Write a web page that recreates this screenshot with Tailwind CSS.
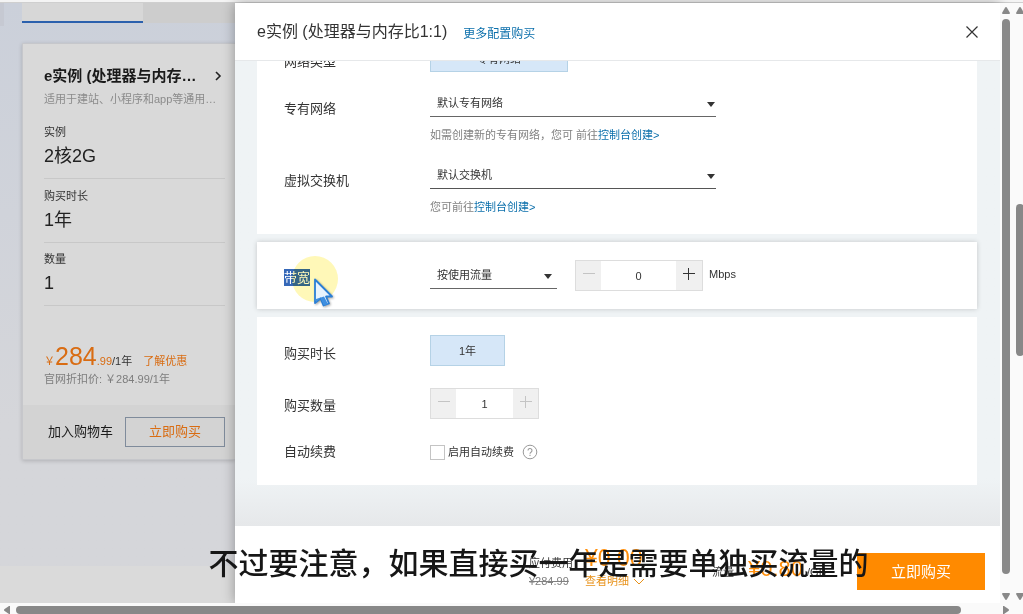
<!DOCTYPE html>
<html lang="zh-CN">
<head>
<meta charset="utf-8">
<title>e实例 购买</title>
<script src="https://cdn.jsdelivr.net/npm/@tailwindcss/browser@4"></script>
</head>
<body class="relative flex h-screen flex-col overflow-hidden bg-[#fafafa] font-['Liberation_Sans','Noto_Sans_CJK_SC',sans-serif] text-[11px] leading-4 text-[#333]">
  <div class="h-[3px] shrink-0 border-b border-[#cfcfcf] bg-[#f4f4f4]"></div>

  <div class="flex min-h-0 flex-1">
    <!-- Dimmed page behind the drawer -->
    <main class="flex w-[235px] shrink-0 flex-col overflow-hidden bg-linear-to-b from-[#cbd0da] to-[#d5d6da] to-70%">
      <div class="flex h-5 shrink-0">
        <div class="h-[23px] w-1 bg-[#c6c9d2]"></div>
        <div class="ml-[18px] w-[121px] border-b-2 border-[#2b60ad] bg-[#d7d7d7]"></div>
        <div class="flex-1 bg-[#cdcdcd]"></div>
      </div>

      <article class="mt-5 ml-[22px] shrink-0 border border-r-0 border-[#c6c7cb] bg-[#d9d9d9] shadow-[0_1px_4px_#0000002e]">
        <div class="pt-[21px] pr-[10px] pl-[21px]">
          <div class="flex items-center justify-between">
            <h2 class="text-[15px] leading-[22px] font-bold whitespace-nowrap text-[#1a1a1a]">e实例 (处理器与内存…</h2>
            <button type="button" aria-label="展开" class="px-[3px]">
              <svg class="h-[10px] w-2" viewBox="0 0 8 10" fill="none" stroke="#222" stroke-width="1.6"><path d="M2 1l4 4-4 4"/></svg>
            </button>
          </div>
          <p class="mt-1 whitespace-nowrap text-[#8b8b8b]">适用于建站、小程序和app等通用…</p>
          <dl class="mt-[9px]">
            <div class="border-b border-[#c8c8c8] pt-2 pb-[10px]"><dt>实例</dt><dd class="mt-1 text-[18px] leading-6 text-[#222]">2核2G</dd></div>
            <div class="border-b border-[#c8c8c8] pt-[9px] pb-[10px]"><dt>购买时长</dt><dd class="mt-1 text-[18px] leading-6 text-[#222]">1年</dd></div>
            <div class="border-b border-[#c8c8c8] pt-2 pb-[10px]"><dt>数量</dt><dd class="mt-1 text-[18px] leading-6 text-[#222]">1</dd></div>
          </dl>
          <div class="mt-[35px] flex items-baseline text-[#d96c12]">
            <span>￥</span><span class="text-[25px] leading-[30px]">284</span><span>.99</span><span class="text-[#333]">/1年</span>
            <a href="#" class="ml-[11px]">了解优惠</a>
          </div>
          <p class="text-[#7d7d7d]">官网折扣价: ￥284.99/1年</p>
        </div>
        <div class="mt-[18px] flex items-center justify-between bg-[#d3d3d3] py-3 pr-[10px] pl-[25px] text-[13px]">
          <button type="button" class="text-[#1a1a1a]">加入购物车</button>
          <button type="button" class="h-[30px] w-[100px] border border-[#7f8b9b] text-[#d96c12]">立即购买</button>
        </div>
      </article>
      <div class="mt-auto h-[37px] shrink-0 bg-[#dadada]"></div>
    </main>

    <!-- Drawer -->
    <section class="relative flex min-w-0 flex-1 flex-col bg-[#eff2f4] shadow-[0_0_12px_#00000055]">
      <header class="flex h-[58px] shrink-0 items-center border-b border-[#e6e8ea] bg-white pr-[21px] pl-[22px]">
        <h1 class="text-[16px] leading-6">e实例 (处理器与内存比1:1)</h1>
        <a href="#" class="ml-4 pt-1 text-[12px] text-[#0b6fab]">更多配置购买</a>
        <button type="button" aria-label="关闭" class="ml-auto">
          <svg class="size-[14px]" viewBox="0 0 14 14" fill="none" stroke="#333" stroke-width="1.2"><path d="M1.500 1.500l11 11M12.500 1.500l-11 11"/></svg>
        </button>
      </header>

      <div class="min-h-0 flex-1 overflow-hidden bg-linear-to-b from-[#eff3f5] from-90% to-[#e6e8ea] pr-[23px] pl-[22px]">
        <div class="-mt-5 flex flex-col gap-2">
          <div class="bg-white pb-[19px] pl-[27px]">
            <div class="flex items-center">
              <span class="w-[146px] pt-[10px] text-[13px]">网络类型</span>
              <button type="button" class="h-[31px] w-[138px] border border-[#b5d2e6] bg-[#d6e7f8] pt-[5px]">专有网络</button>
            </div>
            <div class="mt-[17px] flex items-start">
              <label for="vpc" class="w-[146px] pt-3 text-[13px]">专有网络</label>
              <div>
                <div class="relative w-[286px]">
                  <select id="vpc" class="h-7 w-full appearance-none border-b border-[#666] pl-[7px]"><option>默认专有网络</option></select>
                  <svg class="pointer-events-none absolute top-[13px] right-px h-[5px] w-2" viewBox="0 0 8 5" fill="#333"><path d="M0 0h8L4 5z"/></svg>
                </div>
                <p class="mt-[10px] text-[#808080]">如需创建新的专有网络，您可 前往<a href="#" class="text-[#0b6fab]">控制台创建&gt;</a></p>
              </div>
            </div>
            <div class="mt-[18px] flex items-start">
              <label for="vsw" class="w-[146px] pt-3 text-[13px]">虚拟交换机</label>
              <div>
                <div class="relative w-[286px]">
                  <select id="vsw" class="h-7 w-full appearance-none border-b border-[#555] pl-[7px]"><option>默认交换机</option></select>
                  <svg class="pointer-events-none absolute top-[13px] right-px h-[5px] w-2" viewBox="0 0 8 5" fill="#333"><path d="M0 0h8L4 5z"/></svg>
                </div>
                <p class="mt-[10px] text-[#808080]">您可前往<a href="#" class="text-[#0b6fab]">控制台创建&gt;</a></p>
              </div>
            </div>
          </div>

          <div class="flex items-start bg-white pt-[18px] pb-[18px] pl-[27px] shadow-[0_0_5px_#0000002e]">
            <div class="w-[146px] pt-[9px]">
              <label for="bw" class="relative inline-block bg-[#3568b8] text-[13px] leading-[17px] text-white">带宽
                <span class="absolute top-[-13px] left-2 size-[46px] rounded-full bg-[#fff8b8] mix-blend-multiply"></span>
                <svg class="absolute top-[9px] left-[29px] h-[31px] w-[22px] drop-shadow-[1px_1px_1px_#00000055]" viewBox="0 0 22 31"><path d="M2 1.500v23.500l5.500-4.500 3 7 5.500-2-3-7h6z" fill="#e8f3fd" stroke="#2b7fd6" stroke-width="1.800" stroke-linejoin="round"/><path d="M3 21v3l4.500-4 3.500 7.500 4-1.500-4-7.500z" fill="#3f8fe0"/></svg>
              </label>
            </div>
            <div class="relative w-[127px]">
              <select id="bw" class="h-[29px] w-full appearance-none border-b border-[#666] pt-[2px] pl-[7px]"><option>按使用流量</option></select>
              <svg class="pointer-events-none absolute top-[14px] right-[5px] h-[5px] w-2" viewBox="0 0 8 5" fill="#333"><path d="M0 0h8L4 5z"/></svg>
            </div>
            <div class="ml-[18px] flex h-[31px] w-32 border border-[#ddd]">
              <button type="button" aria-label="减少带宽" class="flex w-[25px] justify-center bg-[#f0f0f0] pt-[7px]"><svg class="size-3" viewBox="0 0 12 12" stroke="#c4c4c4"><path d="M0 5.500h12"/></svg></button>
              <input type="text" aria-label="带宽值" value="0" class="min-w-0 flex-1 text-center">
              <button type="button" aria-label="增加带宽" class="flex w-[26px] justify-center bg-[#f0f0f0] pt-[7px]"><svg class="size-3" viewBox="0 0 12 12" stroke="#333"><path d="M0 5.500h12M5.500 0v12"/></svg></button>
            </div>
            <span class="ml-[6px] pt-[6px]">Mbps</span>
          </div>

          <div class="bg-white pt-[18px] pb-[25px] pl-[27px]">
            <div class="flex items-center">
              <span class="w-[146px] pt-[6px] text-[13px]">购买时长</span>
              <button type="button" class="h-[31px] w-[75px] border border-[#b5d2e6] bg-[#d6e7f8]">1年</button>
            </div>
            <div class="mt-[22px] flex items-center">
              <label for="qty" class="w-[146px] pt-1 text-[13px]">购买数量</label>
              <div class="flex h-[31px] w-[109px] border border-[#ddd]">
                <button type="button" aria-label="减少数量" class="flex w-[25px] justify-center bg-[#f0f0f0] pt-[7px]"><svg class="size-3" viewBox="0 0 12 12" stroke="#c4c4c4"><path d="M0 5.500h12"/></svg></button>
                <input id="qty" type="text" value="1" class="min-w-0 flex-1 text-center">
                <button type="button" aria-label="增加数量" class="flex w-[25px] justify-center bg-[#f0f0f0] pt-[7px]"><svg class="size-3" viewBox="0 0 12 12" stroke="#c4c4c4"><path d="M0 5.500h12M5.500 0v12"/></svg></button>
              </div>
            </div>
            <div class="mt-[25px] flex h-4 items-center">
              <span class="w-[146px] text-[13px]">自动续费</span>
              <input id="renew" type="checkbox" class="size-[15px] appearance-none border border-[#c4c4c4] bg-white">
              <label for="renew" class="ml-[3px]">启用自动续费</label>
              <button type="button" aria-label="自动续费说明" class="ml-2">
                <svg class="size-4" viewBox="0 0 16 16" fill="none" stroke="#999"><circle cx="8" cy="8" r="6.800"/><path d="M6 6.500a2 2 0 1 1 3 1.700q-1 .6-1 1.600M8 10.800v1.200" stroke-width="1.100"/></svg>
              </button>
            </div>
          </div>
        </div>
      </div>

      <footer class="flex h-[77px] shrink-0 items-center bg-white pt-[14px] pr-[15px] pl-[294px]">
        <div class="grid grid-cols-[56px_auto] items-center gap-y-px pb-[10px]">
          <span class="pt-[9px]">应付费用</span>
          <span class="text-[23px] leading-7 text-[#ff8f0c]">¥0.00</span>
          <del class="text-[#808080]">¥284.99</del>
          <a href="#" class="flex items-center gap-1 text-[#e8921a]">查看明细
            <svg class="h-[7px] w-3" viewBox="0 0 12 7" fill="none" stroke="#e8921a"><path d="M1 1l5 5 5-5"/></svg>
          </a>
        </div>
        <div class="ml-auto flex items-baseline pb-[6px]">
          <span>流量</span>
          <span class="ml-[14px] text-[22px] leading-7 text-[#ff8f0c]">¥0.80</span>
          <span class="ml-1">/GB</span>
        </div>
        <button type="button" class="ml-[31px] h-[37px] w-32 bg-[#ff8a00] text-[15px] text-white">立即购买</button>
      </footer>
    </section>

    <!-- Vertical scroll bars: drawer and page -->
    <div class="z-10 flex w-[23px] shrink-0 gap-[6px] overflow-hidden bg-[#fafafa] pl-[2px]" aria-hidden="true">
      <div class="flex shrink-0 flex-col items-center pt-1 pb-[3px]">
        <svg class="h-[7px] w-2" viewBox="0 0 8 7" fill="#888"><path d="M4 0q.6 0 1 .7L8 6q0 1-1 1H1Q0 7 0 6L3 .7Q3.400 0 4 0z"/></svg>
        <div class="mt-[5px] mb-[19px] w-2 flex-1 rounded-full bg-[#888]"></div>
        <svg class="h-[7px] w-2" viewBox="0 0 8 7" fill="#888"><path d="M4 7q.6 0 1-.7L8 1q0-1-1-1H1Q0 0 0 1l3 5.300q.4.700 1 .7z"/></svg>
      </div>
      <div class="flex shrink-0 flex-col items-center pt-1 pb-[3px]">
        <svg class="h-[7px] w-2" viewBox="0 0 8 7" fill="#888"><path d="M4 0q.6 0 1 .7L8 6q0 1-1 1H1Q0 7 0 6L3 .7Q3.400 0 4 0z"/></svg>
        <div class="mt-[190px] h-[152px] w-2 rounded-full bg-[#888]"></div>
        <svg class="mt-auto h-[7px] w-2" viewBox="0 0 8 7" fill="#888"><path d="M4 7q.6 0 1-.7L8 1q0-1-1-1H1Q0 0 0 1l3 5.300q.4.700 1 .7z"/></svg>
      </div>
    </div>
  </div>

  <!-- Horizontal scroll bar -->
  <div class="z-10 flex h-[11px] shrink-0 items-end bg-[#fafafa] pr-[14px] pl-1" aria-hidden="true">
    <svg class="h-2 w-[6px]" viewBox="0 0 6 8" fill="#888"><path d="M0 4q0-.5.600-1L5 0h1v8H5L.6 5Q0 4.500 0 4z"/></svg>
    <div class="mr-[42px] ml-[6px] h-2 flex-1 rounded-full bg-[#888]"></div>
    <svg class="h-2 w-[6px]" viewBox="0 0 6 8" fill="#888"><path d="M6 4q0-.5-.6-1L1 0H0v8h1l4.400-3Q6 4.500 6 4z"/></svg>
  </div>

  <!-- Video caption -->
  <p class="pointer-events-none absolute inset-x-0 bottom-[33px] z-20 pl-[54px] text-center font-['Noto_Sans_CJK_SC',sans-serif] text-[30px] leading-10 font-medium whitespace-nowrap text-[#161616]">不过要注意，如果直接买一年是需要单独买流量的</p>
</body>
</html>
